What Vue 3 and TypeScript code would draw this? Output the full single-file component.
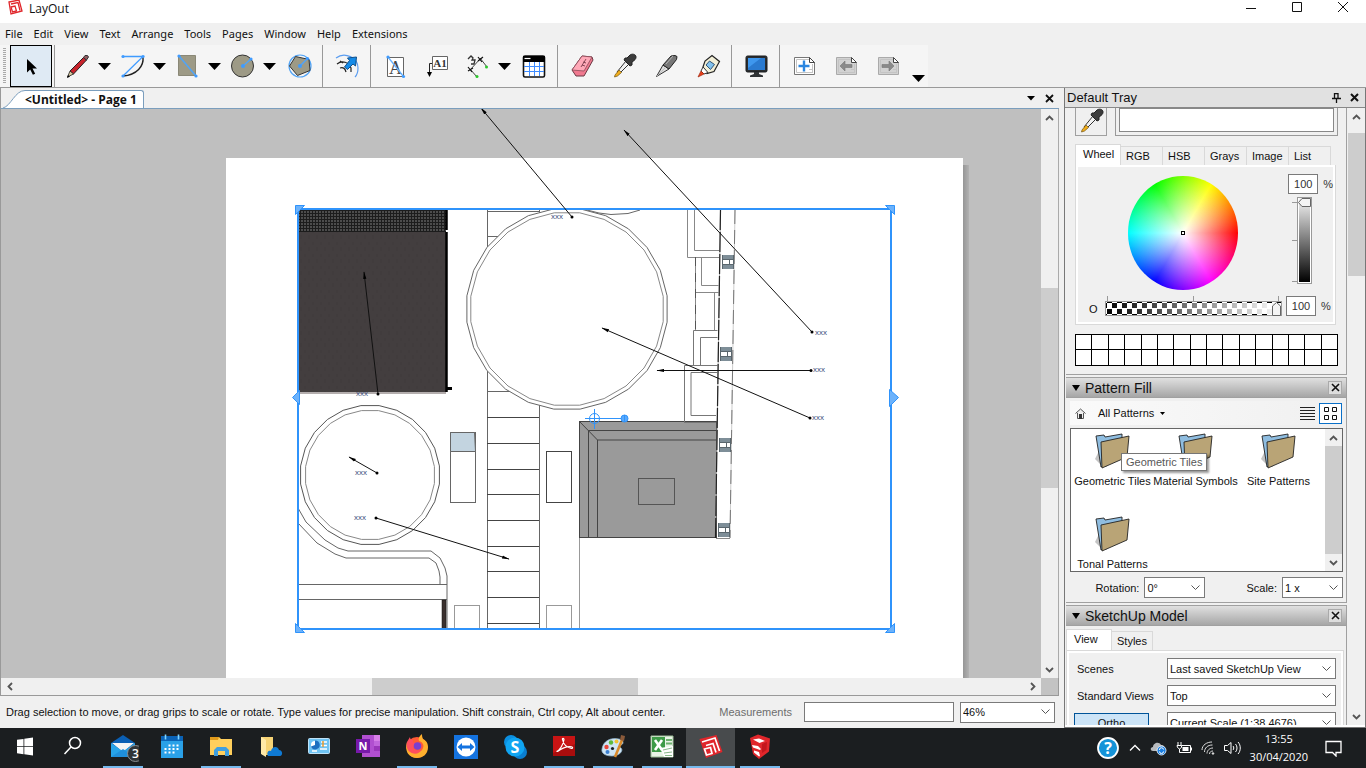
<script setup lang="ts">
import { ref } from 'vue'

interface Tool {
  id: string
  label: string
  menu?: boolean
  active?: boolean
}

interface Task {
  id: string
  label: string
  open?: boolean
  current?: boolean
}

const menus = ['File', 'Edit', 'View', 'Text', 'Arrange', 'Tools', 'Pages', 'Window', 'Help', 'Extensions']

const toolGroups: Tool[][] = [
  [{ id: 'select', label: 'Select', active: true }],
  [
    { id: 'pencil', label: 'Lines', menu: true },
    { id: 'arc', label: 'Arcs', menu: true },
    { id: 'rect', label: 'Rectangles', menu: true },
    { id: 'circle', label: 'Circles', menu: true },
    { id: 'polygon', label: 'Polygon' },
  ],
  [{ id: 'offset', label: 'Offset' }],
  [
    { id: 'text', label: 'Text' },
    { id: 'label', label: 'Label' },
    { id: 'dimension', label: 'Dimensions', menu: true },
    { id: 'table', label: 'Table' },
  ],
  [
    { id: 'eraser', label: 'Erase' },
    { id: 'dropper', label: 'Style' },
    { id: 'knife', label: 'Split' },
    { id: 'glue', label: 'Join' },
  ],
  [{ id: 'monitor', label: 'Start presentation' }],
  [
    { id: 'addPage', label: 'Add page' },
    { id: 'prevPage', label: 'Previous page' },
    { id: 'nextPage', label: 'Next page' },
  ],
]

const page = (fill: string, edge: string) =>
  `<path d="M6.500 7.500h15l5 5v12h-20z" fill="${fill}" stroke="${edge}"/><path d="M8.500 9.500h13M8.500 22.500h16M24.500 14v9M8.500 9.500v13M21 19.500h4" stroke="#c4c4c4" fill="none"/><path d="M21.500 7.500v5h5z" fill="#fff" stroke="#444"/>`

const icons: Record<string, string> = {
  select: '<path d="M12 9v13.500l3.200-3 2.700 5.300 2.300-1-2.700-5.300H22z"/>',
  pencil:
    '<path d="m9 21 13.500-13.500 3 2.500L12.500 24z" fill="#c8232c" stroke="#222"/><path d="m9 21-2.500 6 6-3z" fill="#d8c79a" stroke="#222" stroke-width=".8"/><path d="m22.500 7.500 1.500-2h2.500l1 1.500-2 3z" fill="#8f5d63" stroke="#333"/><path d="m6 28 1-3 2 1.700z"/>',
  arc:
    '<path d="M27 7c1 9-6 18-20 19" fill="none" stroke="#222" stroke-width="1.400"/><path d="M7 6.500h20L7 26" fill="none" stroke="#3f9bff" stroke-width="1.300"/><g fill="#3f9bff"><circle cx="7" cy="6.500" r="1.600"/><circle cx="27" cy="6.500" r="1.600"/><circle cx="7" cy="26" r="1.600"/></g>',
  rect:
    '<path d="M7.500 5.500h17v20h-17z" fill="#9d9a86" stroke="#8a8877"/><path d="m8 6 17 20" stroke="#52a4f5" stroke-width="1.600"/><g fill="#3f9bff"><circle cx="8" cy="6" r="1.600"/><circle cx="25" cy="26" r="1.600"/></g>',
  circle:
    '<circle cx="16.500" cy="16" r="11" fill="#9d9a86" stroke="#333"/><path d="m17 16 8-7" stroke="#52a4f5" stroke-width="1.600"/><g fill="#3f9bff"><circle cx="17" cy="16" r="2"/><circle cx="25" cy="9" r="1.600"/></g>',
  polygon:
    '<circle cx="17" cy="16" r="11" fill="none" stroke="#52a4f5" stroke-width="1.200"/><path d="m6.500 16 6-9.500L26 9.500l1 11-12.500 5z" fill="#9d9a86" stroke="#333"/><path d="m17 16 7-7" stroke="#52a4f5" stroke-width="1.600"/><g fill="#3f9bff"><circle cx="17" cy="16" r="2"/><circle cx="24.500" cy="8.500" r="1.600"/></g>',
  offset:
    '<path d="M5 8C14 1 27 8 27 18c0 4-1 7-3 9" fill="none" stroke="#5b9df0" stroke-width="1.200"/><path d="M6 14c5-4 12-2 14 4l0 4M9 18c3-1 5 0 6 4M9 11l3 2" fill="none" stroke="#222" stroke-width="1.200"/><path d="m13.500 17 5-6.500-2-2.500 9-1-1 9-2.500-2-5.500 5.500z" fill="#158be8" stroke="#12508a"/>',
  text:
    '<path d="M8.500 7.500h16v19h-16z" fill="#fff" stroke="#666"/><text x="16.500" y="24" text-anchor="middle" font-family="Liberation Serif, serif" font-size="18" fill="#444">A</text><path d="m9 7 15 19" stroke="#67b1ff" stroke-width="1.300"/><g fill="#3f9bff"><circle cx="9" cy="7" r="1.600"/><circle cx="24.500" cy="26.500" r="1.600"/></g>',
  label:
    '<path d="M11.500 6.500h15v13h-15z" fill="#fff" stroke="#666"/><text x="19" y="17" text-anchor="middle" font-family="Liberation Serif, serif" font-size="11" font-weight="700" fill="#333">A1</text><path d="M11 13.500H8.500V24" fill="none" stroke="#222"/><path d="M6 22h5l-2.500 5z"/>',
  dimension:
    '<path d="m9 20 10-11M9 19l7 8M19 8l7 9" stroke="#444" fill="none"/><path d="m7 17 4 5M7 21l5-3M17 7l4 5M17 11l5-4" stroke="#111" stroke-width="1.200"/><path d="m7 9 3-3 2 2-1 2 3 0-1 4-3 0" fill="none" stroke="#333" stroke-width="1.300"/><g fill="#2cc72c"><circle cx="16" cy="26.500" r="1.500"/><circle cx="25.500" cy="17" r="1.500"/></g>',
  table:
    '<rect x="5.500" y="6" width="21" height="21" rx="1.500" fill="#fff" stroke="#111" stroke-width="1.600"/><path d="M5 6h22v6H5z"/><path d="M6.500 8.500h6" stroke="#fff" stroke-width="1.200"/><path d="M11.500 12v14M16.500 12v14M21.500 12v14M6 16.500h20M6 21.500h20" stroke="#3f8cff"/>',
  eraser:
    '<path d="m6 20 10-14 10 1 1 3-9 16-8 0z" fill="#f0798f" stroke="#6b3a44"/><path d="m6 20 10-14 10 1-8 14z" fill="#ffa9b8" stroke="#8b4a58" stroke-width=".8"/><path d="m15 17 5-8M17 12l3 1M16 15l3 1" stroke="#7a3c4c" stroke-width=".9"/>',
  dropper:
    '<path d="m9 22 9-11 3 3-10 10z" fill="#f2f2f2" stroke="#333"/><path d="m7 25 4-5 2.500 2.500-4 3.500-3 1z" fill="#f2ae1c" stroke="#6f5210" stroke-width=".7"/><path d="m17 8 2 0 3-3c2-1.500 6-1 6 2 0 2-1 3-4 5v3l-2 1-6-6z" fill="#3c3c3c" stroke="#222"/>',
  knife:
    '<path d="M6.500 26.500 13 15l6 4z" fill="#ddd" stroke="#333"/><path d="m13 15 8-9 4-.5 2 1-.5 3L19 19z" fill="#777" stroke="#222"/><path d="m7 26 9-9M16 14l7-8" stroke="#bbb" stroke-width=".9"/>',
  glue:
    '<path d="m11 17 2-6 7-5.500 7.500 6-5.500 10-7 2z" fill="#f2efd7" stroke="#222" stroke-width="1.200"/><path d="m14 15 3.500-4 5 3.500-4 5z" fill="#82c2ee" stroke="#357"/><path d="m11 17 5 5.500-4 1.500-3-3z" fill="#fff" stroke="#333"/><path d="m6 27 3-6 3 3z" fill="#e8401b" stroke="#a02a12" stroke-width=".7"/>',
  monitor:
    '<rect x="6" y="6" width="21" height="16" rx="1.500" fill="#2a2d30" stroke="#1a1c1e"/><path d="M8 8h17v12H8z" fill="#2a7ad0"/><path d="M8 8h13L8 18z" fill="#3e97ee"/><path d="M14 22h5v2l4 1.500v1.500h-13v-1.500l4-1.500z" fill="#2f3235"/>',
  addPage: page('#fff', '#777') + '<path d="M16 10.500v11M10.500 16h11" stroke="#2b86e0" stroke-width="2.400"/>',
  prevPage: page('#d2d2d2', '#aaa') + '<path d="m10 16 5-5v3.500h7v3h-7V21z" fill="#8a8a8a" stroke="#777" stroke-width=".6"/>',
  nextPage: page('#d2d2d2', '#aaa') + '<path d="m22 16-5-5v3.500h-7v3h7V21z" fill="#8a8a8a" stroke="#777" stroke-width=".6"/>',
}

const tasks: Task[] = [
  { id: 'start', label: 'Start' },
  { id: 'search', label: 'Search' },
  { id: 'mail', label: 'Mail', open: true },
  { id: 'calendar', label: 'Calendar' },
  { id: 'explorer', label: 'File Explorer', open: true },
  { id: 'cloudFolder', label: 'Cloud folder' },
  { id: 'control', label: 'Control Panel' },
  { id: 'notes', label: 'Notes' },
  { id: 'fox', label: 'Firefox', open: true },
  { id: 'viewer', label: 'TeamViewer' },
  { id: 'skype', label: 'Skype' },
  { id: 'pdf', label: 'Acrobat', open: true },
  { id: 'paint', label: 'Paint', open: true },
  { id: 'sheet', label: 'Excel', open: true },
  { id: 'layout', label: 'LayOut', open: true, current: true },
  { id: 'sketchup', label: 'SketchUp', open: true },
]

const taskIcons: Record<string, string> = {
  start: '<path fill="#fff" d="m8 8.800 6.500-.9v7.300H8zM15.300 7.800 24 6.500v8.700h-8.700zM8 16h6.500v7.200L8 22.300zM15.300 16H24v8.500l-8.700-1.200z"/>',
  search: '<circle cx="17" cy="12" r="5.500" fill="none" stroke="#fff" stroke-width="1.500"/><path d="m13 16-6.500 7" stroke="#fff" stroke-width="1.500"/>',
  mail: '<path d="M4 12 16 4l12 8v14H4z" fill="#0a5fb4"/><path d="M5 12h22l-11 9z" fill="#f4f4f4"/><path d="m4 12 12 8.500L28 12v14H4z" fill="#27a3e8"/><path d="m4 26 12-8 12 8z" fill="#1f8fdb"/><circle cx="28.500" cy="22.500" r="8" fill="#303437" stroke="#8a8d90"/><text x="28.500" y="27" text-anchor="middle" font-family="Open Sans, sans-serif" font-size="12" font-weight="600" fill="#fff">3</text>',
  calendar: '<path d="M5 5h22v22H5z" fill="#2aa1e8"/><path d="M5 5h22v5H5z" fill="#0a62b5"/><path d="M9.500 3.500v5M22.500 3.500v5" stroke="#7fd4ff" stroke-width="1.600"/><path d="M12.500 14.500h12M8.500 18h16M8.500 21.500h10" stroke="#fff" stroke-width="2" stroke-dasharray="2 2"/>',
  explorer: '<path d="M5 6h9l2 2h11v16H5z" fill="#ffcf5c"/><path d="M5 6h9l-1 3H5z" fill="#e09a1b"/><path d="M9 25v-6l3-3h9l3 3v6h-4v-5h-7v5z" fill="#3f9fe0"/>',
  cloudFolder: '<path d="M7 6h12v18H9l-2-2z" fill="#f6d375"/><path d="m7 6 5 3v17l-5-3z" fill="#ffe9a8"/><path d="M14 25c-2-4 1-6 3-5 1-5 7-5 8-1 4 0 4 6 1 6z" fill="#0f7ad4"/>',
  control: '<rect x="5.500" y="7.500" width="21" height="15" rx="1" fill="#6ec3f3" stroke="#bfe3f8"/><circle cx="12" cy="14" r="4" fill="#fff"/><path d="M12 14V9.500a4.500 4.500 0 1 1-4 6z" fill="#1b6fc0"/><path d="M18 11h6M18 14.500h6M9 20h5M17 18h7" stroke="#fff" stroke-width="1.500"/><path d="M20 10v6" stroke="#e59a2e" stroke-width="1.500"/>',
  notes: '<path d="M10 4h18v22H10z" fill="#b14fd0"/><path d="M22 4h6v6h-6z" fill="#d77fe8"/><path d="M22 10h6v5h-6z" fill="#c065dc"/><path d="M22 15h6v5h-6z" fill="#9a36ba"/><path d="M4 8h14v14H4z" fill="#7719aa"/><text x="11" y="19" text-anchor="middle" font-family="Open Sans, sans-serif" font-size="11" font-weight="700" fill="#fff">N</text>',
  fox: '<circle cx="16" cy="16.500" r="10.500" fill="#ff5a36"/><path d="M6 11C3 20 8 27 16 27c6 0 11-4 11-11 0-5-3-7-5-8-1-2-1-4-1-5-3 2-4 5-3 7 4 1 6 5 3 9-3 3-9 2-11-2z" fill="#ffb02e"/><path d="M6 11c1-2 2-3 3-5 0 2 1 3 3 3-1 2 1 3 4 4-1 2-3 2-4 4 2 3 7 3 9 1-2 5-8 6-12 3-3-2-4-6-3-10z" fill="#ff4f5e"/><circle cx="16.500" cy="15" r="3.800" fill="#7b3fd1"/>',
  viewer: '<path d="M4 4h24v24H4z" fill="#1473e0"/><circle cx="16" cy="16" r="9.500" fill="#fff"/><path d="m7.500 16 4.500-4v2.500h8V12l4.500 4-4.500 4v-2.500h-8V20z" fill="#1473e0"/>',
  skype: '<circle cx="12" cy="11" r="7" fill="#0b8fe0"/><circle cx="21" cy="21" r="7" fill="#0a7ed0"/><circle cx="16" cy="16" r="9.500" fill="#10a5f2"/><text x="16" y="22" text-anchor="middle" font-family="Open Sans, sans-serif" font-size="16" font-weight="700" fill="#fff">S</text>',
  pdf: '<path d="M5 5h22v20H5z" fill="#a90d0d"/><path d="M5 5h22v8L5 22z" fill="#c81414"/><path d="M8.500 20.500c3-1 7-7 7.500-12 0-1.500-2-1.500-1.500 0 .8 4 4 8 9 9 1.500 0 1.500-1.500 0-1.700-4-.5-9 1-14 4.700z" fill="none" stroke="#fff" stroke-width="1.200"/>',
  paint: '<path d="M5 18C6 10 14 6 22 8c5 1 5 5 2 6-2 1-2 2 0 3 3 3-2 8-9 8S4 22 5 18z" fill="#cfe5f4" stroke="#8fb4cf" stroke-width=".7"/><circle cx="9.500" cy="16" r="2.200" fill="#e8483c"/><circle cx="14" cy="11.500" r="2.200" fill="#5cb93c"/><circle cx="19.500" cy="10.500" r="2" fill="#f1c232"/><circle cx="10.500" cy="21" r="2" fill="#3a7fd0"/><circle cx="15.500" cy="17.500" r="1.600" fill="#1c2024"/><path d="M18 26 25 9" stroke="#d98a2b" stroke-width="2.600"/><path d="m23 9 1-5 4 1-1 5z" fill="#8a5a3a"/>',
  sheet: '<path d="M5 5h22v21H5z" fill="#e9f4e7" stroke="#9dbd98"/><path d="M6 6h13v15H6z" fill="#3d9a47"/><path d="m9 9 7 10M16 9 9 19" stroke="#fff" stroke-width="2.600"/><path d="M20 9h6M20 12.500h6" stroke="#6db06f" stroke-width="1.800"/><path d="m14 17 13-2v11H18z" fill="#fff"/><path d="m17 19 9-2M18 22l8-1M19 24.500h7" stroke="#88b88a"/>',
  layout: '<path d="m4.500 8 17-4 6 17L11 27z" fill="#e0262b"/><path d="m7 11 13-4 4.500 13" fill="none" stroke="#fff" stroke-width="1.700"/><path d="M11 14.500l7-2 3 9" fill="none" stroke="#fff" stroke-width="1.700"/><path d="m9.500 18 6-1.500 1.500 6-5.500 1.500z" fill="none" stroke="#fff" stroke-width="1.700"/>',
  sketchup: '<path d="m6 7 8-3.500 12 4-1 13L15 28l-6-5z" fill="#e0262b"/><path d="m9 8.500 6-1 6 2.500-5.500 2zM8 14l6 1 3 3-1 1-7-2.500zM10 19.500l5 1.500 1 4-1 .5-5-4z" fill="#fff"/><path d="m18 13 5-2-.5 8-4.500 3z" fill="#c2171d"/>',
}

const ring = (cx: number, cy: number, r: number): string =>
  Array.from({ length: 24 }, (_, i) => {
    const a = ((i * 15 + 7.5) * Math.PI) / 180
    return `${(cx + r * Math.cos(a)).toFixed(1)},${(cy + r * Math.sin(a)).toFixed(1)}`
  }).join(' ')

const rungs = [417.5, 443.5, 469.5, 494.5, 520.5, 546.5, 571.5, 597.5, 623.5]

const leaders = [
  { x1: 572, y1: 217, x2: 481, y2: 108, tx: 551, ty: 219 },
  { x1: 812, y1: 332, x2: 624, y2: 130, tx: 815, ty: 335 },
  { x1: 811, y1: 370.5, x2: 657, y2: 370.5, tx: 813, ty: 372 },
  { x1: 810, y1: 418, x2: 602, y2: 328, tx: 812, ty: 420 },
  { x1: 378, y1: 394, x2: 364, y2: 272, tx: 356, ty: 396 },
  { x1: 377, y1: 473, x2: 349, y2: 457, tx: 355, ty: 475 },
  { x1: 376, y1: 518, x2: 509, y2: 559, tx: 354, ty: 520 },
]

const posts = [
  { x: 722, y: 255 },
  { x: 720, y: 347 },
  { x: 719, y: 438 },
  { x: 718, y: 523 },
]

const colorTabs = ['Wheel', 'RGB', 'HSB', 'Grays', 'Image', 'List']
const patterns = ['Geometric Tiles', 'Material Symbols', 'Site Patterns', 'Tonal Patterns']
const brightness = ref(100)
const opacity = ref(100)
</script>

<template>
  <div class="shell">
    <header class="title">
      <svg class="app-mark" width="15" height="15" viewBox="0 0 15 15">
        <path d="m1 2 10-2 3 11-11 3z" fill="#fff" stroke="#e0262b" stroke-width="1.300" />
        <path d="m3 4 7-1.500 2 8M3 7l4-1 1.500 5-4 1z" fill="none" stroke="#e0262b" stroke-width="1.300" />
      </svg>
      <h1>LayOut</h1>
      <div class="window-buttons">
        <button type="button" aria-label="Minimize"><svg width="12" height="12"><path d="M1 7.500h10" stroke="#111" /></svg></button>
        <button type="button" aria-label="Maximize"><svg width="12" height="12"><path d="M1.500 1.500h9v9h-9z" fill="none" stroke="#111" /></svg></button>
        <button type="button" aria-label="Close"><svg width="12" height="12"><path d="m1 1 10 10M11 1 1 11" stroke="#111" /></svg></button>
      </div>
    </header>

    <nav class="menu">
      <button v-for="m in menus" :key="m" type="button">{{ m }}</button>
    </nav>

    <div class="toolbar">
      <div class="tools">
        <span class="grip"></span>
        <div v-for="(group, g) in toolGroups" :key="g" class="group">
          <template v-for="t in group" :key="t.id">
            <button type="button" class="tool" :class="{ active: t.active, narrow: t.menu }" :aria-label="t.label">
              <svg width="32" height="32" viewBox="0 0 32 32" v-html="icons[t.id]"></svg>
            </button>
            <button v-if="t.menu" type="button" class="drop" :aria-label="t.label + ' menu'">
              <svg width="13" height="7"><path d="M0 0h13L6.500 7z" /></svg>
            </button>
          </template>
        </div>
        <button type="button" class="overflow" aria-label="More tools">
          <svg width="13" height="7"><path d="M0 0h13L6.500 7z" /></svg>
        </button>
      </div>
    </div>

    <div class="body">
      <main class="work">
        <div class="doc-tabs">
          <button type="button" class="doc-tab">
            <svg width="22" height="18" viewBox="0 0 22 18"><path d="M0 18C8 16 12 .5 22 .5V18z" fill="#fff" stroke="none" /><path d="M0 18C8 16 12 .5 22 .5" fill="none" stroke="#7b9ebd" /></svg>
            <span>&lt;Untitled&gt; - Page 1</span>
          </button>
          <div class="doc-actions">
            <button type="button" aria-label="Page list"><svg width="8" height="5"><path d="M0 0h8L4 4.500z" /></svg></button>
            <button type="button" aria-label="Close document"><svg width="9" height="9"><path d="m1 1 7 7M8 1 1 8" stroke="#111" stroke-width="1.800" /></svg></button>
          </div>
        </div>

        <div class="canvas-row">
          <div class="canvas">
            <svg width="1040" height="569" viewBox="1 109 1040 569">
              <defs>
                <pattern id="mesh" width="3" height="3" patternUnits="userSpaceOnUse">
                  <rect width="3" height="3" fill="#4c4c4c" />
                  <path d="M0 .5h3M.5 0v3" stroke="#1c1c1c" />
                </pattern>
                <pattern id="soil" width="8" height="12" patternUnits="userSpaceOnUse">
                  <rect width="8" height="12" fill="#433e3f" />
                  <path d="M1 2v3M5 7v4" stroke="#3f3a3a" />
                </pattern>
                <linearGradient id="shade"><stop offset="0" stop-color="#969696" /><stop offset="1" stop-color="#b2b2b2" /></linearGradient>
                <marker id="head" markerWidth="8" markerHeight="4" refX="7" refY="2" orient="auto" markerUnits="userSpaceOnUse"><path d="M0 .4 7.500 2 0 3.600z" /></marker>
                <clipPath id="view"><path d="M298 209h594v420H298z" /></clipPath>
              </defs>
              <rect x="963" y="165" width="6" height="520" fill="url(#shade)" />
              <rect x="226" y="158" width="737" height="530" fill="#fff" />

              <g clip-path="url(#view)" fill="none" stroke="#666">
                <rect x="299" y="232" width="147" height="160" fill="url(#soil)" stroke="none" />
                <rect x="299" y="210" width="147" height="22" fill="url(#mesh)" stroke="none" />
                <path d="M299 393h147" stroke="#b4aeae" stroke-width="2" />
                <path d="M446.500 210v20M446.500 232v160" stroke="#000" stroke-width="2.500" />
                <path d="M447 388.500h5" stroke="#000" stroke-width="3" />

                <path d="M487.500 209v420M539.500 209v420" />
                <path d="M487 211.500h52M487 236.500h20M487 391.500h50" />
                <path v-for="y in rungs" :key="y" :d="`M487 ${y}h52`" stroke="#444" />
                <path d="m587 210 12 3 12 1.500 17-1 12-3.500" />
                <polygon :points="ring(567, 309, 101)" fill="#fff" />
                <polygon :points="ring(567, 309, 97)" stroke="#888" />

                <path d="m298 508 8 14 19 18 13 8 10 3h83l9 7 5 10 2 8v53" />
                <path d="m298 523 19 20 18 11 11 4h83l7 5 3 8 1 6v7" />
                <path d="M298 584.500h149M298 599.500h149" />
                <rect x="442" y="600" width="4" height="30" fill="#3a302e" stroke="#111" stroke-width=".5" />
                <polygon :points="ring(370, 475, 70)" fill="#fff" stroke="#555" />
                <polygon :points="ring(370, 475, 65)" stroke="#888" />

                <rect x="450.500" y="432.500" width="25" height="70" />
                <path d="M450.500 432.500h24l1 19h-25z" fill="#c3d4e0" />
                <rect x="546.500" y="451.500" width="25" height="51" stroke="#444" />
                <rect x="454.500" y="605.500" width="25" height="30" stroke="#999" />
                <rect x="546.500" y="605.500" width="25" height="30" stroke="#999" />

                <path d="M579.500 538v92" stroke="#999" />
                <rect x="579.500" y="421.500" width="137" height="116" fill="#9a9a9a" stroke="#444" />
                <path d="m579.500 421.500 18 18.500h119M588.500 538V430.500h128M597.500 538V440" stroke="#444" />
                <rect x="638.500" y="478.500" width="36" height="26" stroke="#555" />

                <path d="M687.500 209v48.500h32M694.500 209v41.500h25" stroke="#888" />
                <path d="M695.500 257v35.500h23M701.500 257v28.500h17M695.500 292v38.500M714.500 292v38" stroke="#888" />
                <path d="M693.500 365v-34.500h24M700.500 365v-27.500h17" stroke="#777" />
                <path d="M684.500 422.500v-57h33M716 415.500h-25v-43h26M684 422.500h32" stroke="#777" />
                <path d="M695.500 257v72" stroke="#555" stroke-dasharray="9 7" />
                <path d="m735 210-5 328" stroke="#ccc" />
                <path d="m735 210-5 328" stroke="#777" stroke-dasharray="14 6" />
                <path d="m720.500 210-5 328" stroke="#aaa" />
                <path d="m720.500 210-5 328" stroke="#222" stroke-width="1.200" stroke-dasharray="20 2" />
                <path d="M716 538.500h14" stroke="#888" />
                <g v-for="p in posts" :key="p.y" stroke="none">
                  <rect :x="p.x" :y="p.y" width="11" height="14" fill="#7e8e98" />
                  <rect :x="p.x" :y="p.y + 5" width="11" height="4" fill="#fff" />
                  <path :d="`M${p.x} ${p.y + 4.5}h11M${p.x} ${p.y + 9.5}h11M${p.x + 7.5} ${p.y + 4}v6M${p.x + 0.5} ${p.y}v14M${p.x + 11.5} ${p.y}v14`" stroke="#5a666d" />
                </g>
              </g>

              <g class="selection">
                <rect x="298" y="209" width="593" height="420" fill="none" stroke="#2f93fb" stroke-width="2" />
                <g fill="#6cb2fb" stroke="#2f93fb">
                  <path d="M295.500 205.500h9l-9 9zM894.500 205.500h-9l9 9zM295.500 632.500h9l-9-9zM894.500 632.500h-9l9-9z" />
                  <path d="m292.500 397.500 7-7v14zM889.500 389.500l9 8-9 9z" />
                </g>
                <g fill="none" stroke="#2f93fb">
                  <circle cx="594.500" cy="418.500" r="5" />
                  <path d="M585 418.500h40M594.500 409v20" />
                  <circle cx="624.500" cy="418.500" r="3.500" fill="#5aa9fb" />
                  <path d="M624.500 415v7" />
                </g>
              </g>

              <g v-for="(l, i) in leaders" :key="i">
                <line :x1="l.x1" :y1="l.y1" :x2="l.x2" :y2="l.y2" stroke="#111" marker-end="url(#head)" />
                <circle :cx="l.x1" :cy="l.y1" r="1.500" />
                <text :x="l.tx" :y="l.ty" class="note">xxx</text>
              </g>
            </svg>
          </div>
          <div class="vbar">
            <button type="button" aria-label="Scroll up"><svg width="9" height="6"><path d="m1 5 3.500-3.500L8 5" /></svg></button>
            <div class="lane"><span class="thumb work-thumb"></span></div>
            <button type="button" aria-label="Scroll down"><svg width="9" height="6"><path d="m1 1 3.500 3.500L8 1" /></svg></button>
          </div>
        </div>
        <div class="hbar">
          <button type="button" aria-label="Scroll left"><svg width="6" height="9"><path d="M5 1 1.500 4.500 5 8" /></svg></button>
          <div class="hlane"><span class="thumb"></span></div>
          <button type="button" aria-label="Scroll right"><svg width="6" height="9"><path d="m1 1 3.500 3.500L1 8" /></svg></button>
          <span class="corner"></span>
        </div>

        <footer class="status">
          <p>Drag selection to move, or drag grips to scale or rotate. Type values for precise manipulation. Shift constrain, Ctrl copy, Alt about center.</p>
          <label for="measure">Measurements</label>
          <input id="measure" type="text" />
          <select aria-label="Zoom"><option>46%</option></select>
        </footer>
      </main>

      <aside class="tray">
        <div class="tray-head">
          <h2>Default Tray</h2>
          <button type="button" aria-label="Pin"><svg width="9" height="10"><path d="M2.500 0v5.500M2.500 .5h4M6 0v5.500M0 5.500h9M4.500 5v5" stroke="#111" stroke-width="1.300" fill="none" /></svg></button>
          <button type="button" aria-label="Close tray"><svg width="9" height="9"><path d="m1 1 7 7M8 1 1 8" stroke="#111" stroke-width="2" /></svg></button>
        </div>
        <div class="tray-body">
          <div class="panels">
            <section class="panel colors">
              <div class="sample-row">
                <button type="button" class="pick" aria-label="Sample colour"><svg width="32" height="32" viewBox="0 0 32 32" v-html="icons.dropper"></svg></button>
                <div class="sample"><span></span></div>
              </div>
              <div class="tabs">
                <button v-for="(t, i) in colorTabs" :key="t" type="button" :class="{ on: i === 0 }">{{ t }}</button>
              </div>
              <div class="sheet">
                <div class="wheel-row">
                  <div class="wheel"><span></span></div>
                  <div class="bright">
                    <div class="pct"><input v-model="brightness" type="text" aria-label="Brightness percent" /><span>%</span></div>
                    <div class="bright-track">
                      <svg width="5" height="86"><path d="M0 5.500h5M0 43.500h5M0 84.500h5" stroke="#999" /></svg>
                      <input v-model="brightness" class="vrange" type="range" min="0" max="100" aria-label="Brightness" />
                    </div>
                  </div>
                </div>
                <div class="opacity-row">
                  <label for="op">O</label>
                  <div class="op-track">
                    <div class="ticks"><i></i><i></i><i></i></div>
                    <input id="op" v-model="opacity" class="hrange" type="range" min="0" max="100" />
                  </div>
                  <div class="pct"><input v-model="opacity" type="text" aria-label="Opacity percent" /><span>%</span></div>
                </div>
              </div>
              <div class="wells"><span v-for="n in 32" :key="n"></span></div>
            </section>

            <section class="panel">
              <div class="panel-head">
                <svg width="8" height="6"><path d="M0 0h8L4 6z" /></svg>
                <h3>Pattern Fill</h3>
                <button type="button" aria-label="Close Pattern Fill"><svg width="9" height="9"><path d="m1 1 7 7M8 1 1 8" stroke="#111" stroke-width="1.600" /></svg></button>
              </div>
              <div class="pattern-bar">
                <button type="button" aria-label="Home"><svg width="11" height="11" viewBox="0 0 11 11"><path d="M.5 5.500 5.500 1l5 4.500M2.500 5v5.500h6V5" fill="#eee" stroke="#555" /><path d="M4 6h3v5H4z" fill="#333" /></svg></button>
                <button type="button" class="crumb">All Patterns <svg width="5" height="3"><path d="M0 0h5L2.500 3z" /></svg></button>
                <button type="button" class="mode" aria-label="List view"><svg width="15" height="13"><path d="M0 .5h15M0 3.500h15M0 6.500h15M0 9.500h15M0 12.500h15" stroke="#222" /></svg></button>
                <button type="button" class="mode on" aria-label="Thumbnail view"><svg width="15" height="15" fill="none" stroke="#111"><path d="M1.500 1.500h4v4h-4zM9.500 1.500h4v4h-4zM1.500 9.500h4v4h-4zM9.500 9.500h4v4h-4z" /></svg></button>
              </div>
              <div class="library">
                <ul>
                  <li v-for="(p, i) in patterns" :key="p">
                    <svg width="36" height="36" viewBox="0 0 36 36">
                      <path d="m0 26 6-12 6 20-5-1-5-5z" fill="#c4c4c4" />
                      <path d="m1 3 8-1 1 2 17-3v16L6 34z" fill="#8fbde0" stroke="#222" stroke-width=".9" />
                      <path d="m6 9 28-6-2 21L7 35z" fill="#b9a476" stroke="#222" stroke-width=".9" />
                    </svg>
                    <span>{{ p }}</span>
                    <div v-if="i === 0" class="tip" role="tooltip">Geometric Tiles</div>
                  </li>
                </ul>
                <div class="vbar">
                  <button type="button" aria-label="Scroll patterns up"><svg width="9" height="6"><path d="m1 5 3.500-3.500L8 5" /></svg></button>
                  <div class="lane"><span class="thumb full"></span></div>
                  <button type="button" aria-label="Scroll patterns down"><svg width="9" height="6"><path d="m1 1 3.500 3.500L8 1" /></svg></button>
                </div>
              </div>
              <div class="pattern-foot">
                <label for="rot">Rotation:</label>
                <select id="rot"><option>0°</option></select>
                <label for="scale" class="scale">Scale:</label>
                <select id="scale"><option>1 x</option></select>
              </div>
            </section>

            <section class="panel model">
              <div class="panel-head">
                <svg width="8" height="6"><path d="M0 0h8L4 6z" /></svg>
                <h3>SketchUp Model</h3>
                <button type="button" aria-label="Close SketchUp Model"><svg width="9" height="9"><path d="m1 1 7 7M8 1 1 8" stroke="#111" stroke-width="1.600" /></svg></button>
              </div>
              <div class="tabs">
                <button type="button" class="on">View</button>
                <button type="button">Styles</button>
              </div>
              <div class="sheet form">
                <label for="scene">Scenes</label>
                <select id="scene"><option>Last saved SketchUp View</option></select>
                <label for="std">Standard Views</label>
                <select id="std"><option>Top</option></select>
                <button type="button" class="ortho">Ortho</button>
                <select aria-label="Scale"><option>Current Scale (1:38.4676)</option></select>
              </div>
            </section>
          </div>
          <div class="vbar">
            <button type="button" aria-label="Scroll tray up"><svg width="9" height="6"><path d="m1 5 3.500-3.500L8 5" /></svg></button>
            <div class="lane"><span class="thumb tray-thumb"></span></div>
            <button type="button" aria-label="Scroll tray down"><svg width="9" height="6"><path d="m1 1 3.500 3.500L8 1" /></svg></button>
          </div>
        </div>
      </aside>
    </div>

    <div class="taskbar">
      <button v-for="t in tasks" :key="t.id" type="button" class="task" :class="{ open: t.open, current: t.current }" :aria-label="t.label">
        <svg width="32" height="32" viewBox="0 0 32 32" v-html="taskIcons[t.id]"></svg>
      </button>
      <div class="system">
        <svg width="24" height="24" viewBox="0 0 24 24"><circle cx="12" cy="12" r="10" fill="#1593d8" stroke="#fff" stroke-width="1.800" /><text x="12" y="18" text-anchor="middle" class="q">?</text></svg>
        <svg width="12" height="12" fill="none" stroke="#fff" stroke-width="1.300"><path d="m1 8.500 5-5 5 5" /></svg>
        <svg width="17" height="16" viewBox="0 0 17 16"><path d="M3 11C0 11 0 7 3 7c0-4 6-6 8-2 3 0 4 2 4 4v2z" fill="#b9bcbf" /><circle cx="11.500" cy="10.500" r="4.500" fill="#1c7fe0" stroke="#fff" stroke-width=".8" /><path d="M9.500 10a2 2 0 0 1 4-.5M13.500 11.500a2 2 0 0 1-4 0" stroke="#fff" fill="none" /></svg>
        <svg width="16" height="14" viewBox="0 0 16 14" fill="none" stroke="#fff"><path d="M5.500 4.500h9v7h-11V8M2 1v3M5 1v3M1 4.500h4.500v2l-2 1.500-2-1.500zM15.500 6.500v3" /><path d="M6.500 6h6v4h-6z" fill="#fff" stroke="none" /></svg>
        <svg width="14" height="14" viewBox="0 0 14 14" fill="none" stroke="#ddd"><path d="M1 9C1 4 6 1 11 1M3.500 11c0-4 3-7 8-7M6 12.500c0-3 2.500-5.500 6-5.500M8.500 13c0-2 1.500-3 3.500-3" /><circle cx="12" cy="12.500" r=".8" fill="#fff" /></svg>
        <svg width="17" height="14" viewBox="0 0 17 14" fill="none" stroke="#fff"><path d="M.5 4.500h3l3.500-3v11l-3.500-3h-3zM9 5c1 1 1 3 0 4M11.500 3c2 2 2 6 0 8M14 1c3 3 3 9 0 12" /></svg>
        <time><span>13:55</span><span>30/04/2020</span></time>
        <svg class="notice" width="17" height="17" fill="none" stroke="#fff" stroke-width="1.300"><path d="M1 1.500h15v11h-5v3.500L7.500 12.500H1z" /></svg>
      </div>
    </div>
  </div>
</template>

<style>
html,
body {
  overflow: hidden;
}
</style>

<style scoped>
* {
  box-sizing: border-box;
}
.shell {
  height: 100vh;
  display: flex;
  flex-direction: column;
  background: #f0f0f0;
  color: #111;
  font-family: 'Liberation Sans', Arial, sans-serif;
  font-size: 11px;
  overflow: hidden;
}
button,
input,
select {
  font: inherit;
  color: inherit;
  margin: 0;
}
button {
  border: 0;
  padding: 0;
  background: none;
  display: flex;
  align-items: center;
  justify-content: center;
}
h1,
h2,
h3,
p,
ul {
  margin: 0;
  padding: 0;
  font-weight: 400;
}
svg {
  display: block;
  flex: none;
}
.title {
  height: 23px;
  flex: none;
  display: flex;
  background: #fff;
  font-family: 'Open Sans', sans-serif;
}
.app-mark {
  margin: 0 6px 0 8px;
}
.title h1 {
  font-size: 12px;
  line-height: 17px;
}
.window-buttons {
  margin-left: auto;
  display: flex;
  height: 14px;
}
.window-buttons button {
  width: 46px;
}
.menu {
  height: 22px;
  flex: none;
  display: flex;
  gap: 11px;
  padding: 0 0 2px 5px;
  font-family: 'Noto Sans', 'Open Sans', sans-serif;
  font-size: 11px;
}
.toolbar {
  height: 43px;
  flex: none;
  border-bottom: 1px solid #999;
}
.tools {
  height: 42px;
  width: fit-content;
  display: flex;
  background: #f5f5f5;
}
.grip {
  width: 3px;
  margin: 3px 4px 3px 3px;
  background: repeating-linear-gradient(#aaa 0 1px, #f5f5f5 1px 2px);
}
.group {
  display: flex;
}
.group + .group::before {
  content: '';
  width: 1px;
  margin: 0 3px 0 2px;
  background: #999;
}
.tool {
  width: 42px;
  height: 42px;
}
.tool.narrow {
  width: 38px;
}
.tool.active {
  border: 1px solid #000;
  background: #dfeaf4;
}
.drop {
  width: 17px;
}
.overflow {
  width: 19px;
  align-items: flex-end;
  padding-bottom: 5px;
}
.body {
  flex: 1;
  min-height: 0;
  display: flex;
  gap: 5px;
}
.work {
  flex: 1;
  min-width: 0;
  display: flex;
  flex-direction: column;
}
.doc-tabs {
  height: 21px;
  flex: none;
  display: flex;
  justify-content: space-between;
  align-items: flex-end;
  border-left: 1px solid #999;
  border-bottom: 1px solid #7b9ebd;
}
.doc-tab {
  height: 18px;
  margin-left: 2px;
  font-family: 'Open Sans', sans-serif;
  font-size: 12px;
  font-weight: 700;
}
.doc-tab span {
  height: 18px;
  line-height: 18px;
  padding-right: 6px;
  background: #fff;
  border-top: 1px solid #7b9ebd;
  border-right: 1px solid #7b9ebd;
  border-radius: 0 3px 0 0;
}
.doc-actions {
  display: flex;
  gap: 10px;
  height: 20px;
  padding-right: 5px;
}
.canvas-row {
  flex: 1;
  min-height: 0;
  display: flex;
  border-left: 1px solid #999;
  border-right: 1px solid #aaa;
}
.canvas {
  flex: 1;
  min-width: 0;
  background: #bfbfbf;
  overflow: hidden;
}
.note {
  font-size: 8px;
  fill: #3b4f7c;
}
.vbar {
  width: 17px;
  flex: none;
  display: flex;
  flex-direction: column;
  background: #f0f0f0;
}
.vbar button {
  height: 17px;
}
.vbar path,
.hbar path {
  fill: none;
  stroke: #555;
  stroke-width: 1.8;
}
.lane {
  flex: 1;
  display: flex;
  flex-direction: column;
}
.thumb {
  background: #cdcdcd;
}
.work-thumb {
  height: 200px;
  margin-top: 162px;
}
.tray-thumb {
  height: 143px;
  margin: 8px 0 0;
}
.full {
  flex: 1;
}
.hbar {
  height: 18px;
  flex: none;
  display: flex;
  border: 1px solid #999;
  border-top: 0;
}
.hbar button {
  width: 17px;
}
.hlane {
  flex: 1;
  display: flex;
}
.hlane .thumb {
  width: 266px;
  margin-left: 354px;
}
.corner {
  width: 17px;
  background: #c3c3c3;
}
.status {
  height: 32px;
  flex: none;
  display: flex;
  align-items: center;
  padding: 0 4px 0 6px;
}
.status p {
  flex: 1;
  white-space: nowrap;
}
.status label {
  color: #6d6d6d;
  margin-right: 12px;
}
.status input {
  width: 150px;
  height: 20px;
  margin-right: 6px;
}
.status select {
  width: 95px;
}
input[type='text'] {
  border: 1px solid #7a7a7a;
  background: #fff;
  border-radius: 0;
  outline: 0;
  padding: 0;
}
select {
  appearance: none;
  height: 21px;
  border: 1px solid #7a7a7a;
  border-radius: 0;
  padding: 0 16px 0 2px;
  background: #fff url("data:image/svg+xml,%3Csvg xmlns='http://www.w3.org/2000/svg' width='9' height='6'%3E%3Cpath d='m.5.5 4 4 4-4' fill='none' stroke='%23555'/%3E%3C/svg%3E") no-repeat right 4px center;
}
.tray {
  width: 302px;
  flex: none;
  display: flex;
  flex-direction: column;
  border: 1px solid #777;
  border-top: 0;
  min-height: 0;
}
.tray-head {
  height: 20px;
  flex: none;
  display: flex;
  align-items: center;
  gap: 9px;
  padding: 0 6px 0 2px;
  background: #e1e1e1;
  border-bottom: 1px solid #888;
}
.tray-head h2 {
  flex: 1;
  font-size: 13px;
}
.tray-body {
  flex: 1;
  min-height: 0;
  display: flex;
  justify-content: space-between;
  overflow: hidden;
  border-bottom: 2px solid #fff;
}
.panels {
  flex: 1;
  min-width: 0;
  margin: 0 1px;
  overflow: hidden;
}
.panel {
  border: 1px solid #a0a0a0;
  border-left: 0;
  margin-bottom: 2px;
}
.colors {
  height: 267px;
  border-top: 0;
  padding: 0 8px 0 9px;
}
.sample-row {
  display: flex;
  gap: 8px;
  height: 28px;
}
.pick {
  width: 32px;
  border: 1px solid #a0a0a0;
  border-top: 0;
  padding-bottom: 2px;
}
.sample {
  flex: 1;
  border: 1px solid #999;
  border-top: 0;
  padding: 0 3px 3px;
  display: flex;
}
.sample span {
  flex: 1;
  background: #fff;
  border: 1px solid #888;
}
.tabs {
  display: flex;
  align-items: flex-end;
  height: 21px;
  margin-top: 8px;
}
.tabs button {
  height: 19px;
  min-width: 42px;
  padding: 0 5px;
  justify-content: flex-start;
  border: 1px solid #d9d9d9;
  border-left: 0;
  border-bottom: 0;
}
.tabs .on {
  height: 21px;
  width: 46px;
  padding: 0 7px 3px;
  background: #fff;
  border-left: 1px solid #d9d9d9;
}
.sheet {
  height: 160px;
  border: 1px solid #d9d9d9;
  border-top: 0;
  background: #f0f0f0;
  box-shadow: inset 0 0 0 2px #fff;
  padding: 9px 2px 0 12px;
  margin-right: 2px;
}
.wheel-row {
  display: flex;
  height: 116px;
}
.wheel {
  width: 114px;
  height: 114px;
  margin: 2px 0 0 40px;
  border-radius: 50%;
  display: grid;
  place-items: center;
  background:
    radial-gradient(closest-side, #fff, rgba(255, 255, 255, 0)),
    conic-gradient(from 90deg, #f00, #f0f, #00f, #0ff, #0f0, #ff0, #f00);
}
.wheel span {
  width: 4px;
  height: 4px;
  border: 1px solid #000;
  background: #fff;
}
.bright {
  margin-left: 50px;
}
.pct {
  display: flex;
  align-items: center;
  gap: 5px;
  color: #333;
}
.pct input {
  width: 30px;
  height: 20px;
  text-align: center;
}
.bright-track {
  display: flex;
  margin: 3px 0 0 4px;
}
input[type='range'] {
  appearance: none;
  margin: 0;
  border: 1px solid #999;
}
.vrange {
  writing-mode: vertical-lr;
  direction: rtl;
  width: 15px;
  height: 87px;
  background: linear-gradient(#f6f6f6, #000) content-box, #fff;
  padding: 0 1px 1px;
}
.vrange::-webkit-slider-thumb {
  appearance: none;
  width: 13px;
  height: 9px;
  background: url("data:image/svg+xml,%3Csvg xmlns='http://www.w3.org/2000/svg' width='13' height='9'%3E%3Cpath d='M.5 4.500 4 .5h8.500v8H4z' fill='%23f4f4f4' stroke='%23666'/%3E%3C/svg%3E");
}
.opacity-row {
  display: flex;
  align-items: flex-end;
  margin-top: 6px;
}
.opacity-row label {
  width: 17px;
  padding: 0 0 1px 1px;
}
.op-track {
  width: 177px;
  margin-right: 4px;
}
.ticks {
  display: flex;
  justify-content: space-between;
  padding: 0 3px 0 2px;
}
.ticks i {
  width: 1px;
  height: 5px;
  background: #999;
}
.hrange {
  display: block;
  width: 100%;
  height: 15px;
  padding: 1px 0;
  background:
    linear-gradient(90deg, rgba(255, 255, 255, 0), #fff) content-box,
    conic-gradient(#000 25%, #fff 0 50%, #000 0 75%, #fff 0) 1px 1px / 10px 11px;
}
.hrange::-webkit-slider-thumb {
  appearance: none;
  width: 9px;
  height: 14px;
  background: url("data:image/svg+xml,%3Csvg xmlns='http://www.w3.org/2000/svg' width='9' height='14'%3E%3Cpath d='M.5 13.500V4l4-3.500 4 3.500v9.500z' fill='%23f4f4f4' stroke='%23666'/%3E%3C/svg%3E");
}
.wells {
  display: grid;
  grid-template-columns: repeat(16, 1fr);
  margin-top: 9px;
  border: 1px solid #000;
  border-width: 1px 0 0 1px;
}
.wells span {
  height: 16px;
  background: #fff;
  border: 1px solid #000;
  border-width: 0 1px 1px 0;
}
.wells span:nth-child(-n + 16) {
  height: 15px;
}
.panel-head {
  height: 20px;
  display: flex;
  align-items: center;
  gap: 5px;
  padding: 0 4px 0 6px;
  background: linear-gradient(#e0e0e0, #a6a6a6);
  border-bottom: 1px solid #a0a0a0;
}
.panel-head h3 {
  flex: 1;
  font-size: 14px;
  line-height: 18px;
}
.panel-head button {
  width: 14px;
  height: 14px;
  background: #ddd;
  border: 1px solid #aaa;
}
.pattern-bar {
  height: 24px;
  margin: 3px 4px;
  display: flex;
  align-items: center;
  padding-left: 5px;
  background: linear-gradient(90deg, #fafafa, #f0f0f0);
}
.crumb {
  margin: 0 auto 0 12px;
  gap: 6px;
}
.mode {
  width: 23px;
  height: 21px;
}
.mode.on {
  border: 1px solid #0a70c8;
  background: #fff;
}
.library {
  height: 144px;
  margin: 0 3px 0 4px;
  border: 1px solid #666;
  background: #fff;
  display: flex;
}
.library ul {
  flex: 1;
  list-style: none;
  display: grid;
  grid-template-columns: repeat(3, 83px);
  grid-auto-rows: 83px;
  overflow: hidden;
}
.library li {
  position: relative;
  display: flex;
  flex-direction: column;
  align-items: center;
  padding-top: 4px;
  white-space: nowrap;
}
.library li > span {
  margin-top: 6px;
}
.tip {
  position: absolute;
  left: 50px;
  top: 24px;
  z-index: 1;
  height: 18px;
  padding: 0 4px;
  line-height: 16px;
  color: #575757;
  background: #fff;
  border: 1px solid #767676;
  box-shadow: 2px 2px 2px rgba(0, 0, 0, 0.4);
}
.pattern-foot {
  display: flex;
  align-items: center;
  justify-content: flex-end;
  gap: 5px;
  padding: 5px 3px 4px;
}
.pattern-foot select {
  width: 61px;
}
.pattern-foot .scale {
  margin-left: 36px;
}
.model .tabs {
  margin-top: 3px;
}
.model .tabs button {
  min-width: 39px;
}
.form {
  border-top: 1px solid #d9d9d9;
  display: grid;
  grid-template-columns: 90px 1fr;
  grid-auto-rows: 21px;
  row-gap: 6px;
  align-items: center;
  padding: 7px 7px 0 10px;
}
.ortho {
  width: 75px;
  height: 20px;
  margin-left: -3px;
  background: #cce4f7;
  border: 1px solid #005499;
}
.taskbar {
  height: 40px;
  flex: none;
  display: flex;
  background: #1b1e20;
  color: #fff;
}
.task {
  width: 49px;
  border-bottom: 2px solid transparent;
  position: relative;
}
.task.open::after {
  content: '';
  position: absolute;
  left: 5px;
  right: 4px;
  bottom: -2px;
  height: 2px;
  background: #76b9ed;
}
.task.current {
  background: #484b4d;
}
.task.current::after {
  left: 0;
  right: 0;
}
.system {
  margin-left: auto;
  display: flex;
  align-items: center;
  gap: 9px;
  padding-right: 24px;
  font-family: 'Open Sans', sans-serif;
}
.q {
  font-size: 16px;
  font-weight: 700;
  fill: #fff;
}
time {
  display: flex;
  flex-direction: column;
  align-items: center;
  line-height: 18px;
}
.notice {
  margin-left: 8px;
}
</style>
